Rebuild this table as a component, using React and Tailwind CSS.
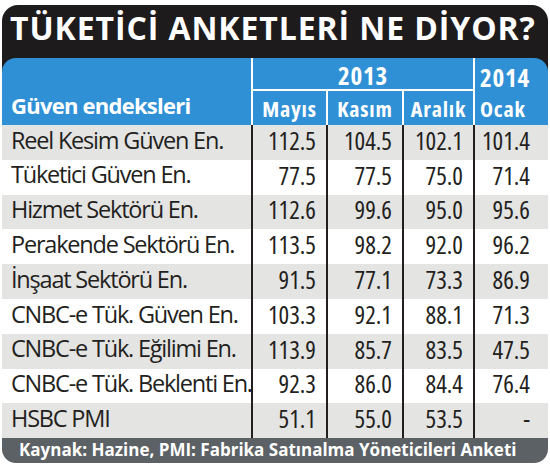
import React from 'react';

const rows = [
  { label: 'Reel Kesim Güven En.', values: ['112.5', '104.5', '102.1', '101.4'] },
  { label: 'Tüketici Güven En.', values: ['77.5', '77.5', '75.0', '71.4'] },
  { label: 'Hizmet Sektörü En.', values: ['112.6', '99.6', '95.0', '95.6'] },
  { label: 'Perakende Sektörü En.', values: ['113.5', '98.2', '92.0', '96.2'] },
  { label: 'İnşaat Sektörü En.', values: ['91.5', '77.1', '73.3', '86.9'] },
  { label: 'CNBC-e Tük. Güven En.', values: ['103.3', '92.1', '88.1', '71.3'] },
  { label: 'CNBC-e Tük. Eğilimi En.', values: ['113.9', '85.7', '83.5', '47.5'] },
  { label: 'CNBC-e Tük. Beklenti En.', values: ['92.3', '86.0', '84.4', '76.4'] },
  { label: 'HSBC PMI', values: ['51.1', '55.0', '53.5', '-'] },
];

const cols = 'grid grid-cols-[249px_75px_76px_71px_75px]';

export default function App() {
  return (
    <div className="w-[550px] h-[470px] bg-white pt-[5px] px-[2px] font-['Open_Sans',sans-serif] text-[#231f20]">
      {/* Title + blue header */}
      <div className="bg-[#1e1b1c] rounded-t-[16px]">
        <div className="h-[53px] flex items-end pl-[8px] pb-[14px]">
          <h1 className="text-[32px] leading-none font-bold text-white tracking-[0.9px] whitespace-nowrap">
            TÜKETİCİ ANKETLERİ NE DİYOR?
          </h1>
        </div>
        <div className={`${cols} bg-[#3090d6] rounded-t-[14px] h-[67px] text-white font-bold`}>
          <div className="flex items-end pl-[9px] pb-[9px] text-[22px] leading-none tracking-[-0.75px]">
            Güven endeksleri
          </div>
          <div className="col-span-3 flex flex-col border-l-2 border-white">
            <div className="h-[33px] border-b-2 border-white flex items-end justify-center pb-[1px] text-[25px] leading-none font-stretch-condensed tracking-[0.8px]">
              2013
            </div>
            <div className="flex-1 grid grid-cols-[73px_76px_71px] text-[22px] leading-none font-stretch-condensed tracking-[0.8px]">
              <div className="flex items-end justify-center pb-[6px]">Mayıs</div>
              <div className="flex items-end justify-center pb-[6px] border-l-2 border-white">Kasım</div>
              <div className="flex items-end justify-center pb-[6px] border-l-2 border-white">Aralık</div>
            </div>
          </div>
          <div className="border-l-2 border-white flex flex-col pl-[5px] font-stretch-condensed tracking-[0.8px]">
            <div className="h-[33px] flex items-end pb-[1px] text-[25px] leading-none">2014</div>
            <div className="flex-1 flex items-end pb-[6px] text-[22px] leading-none">Ocak</div>
          </div>
        </div>
      </div>

      {/* Body */}
      <div>
        {rows.map((r, i) => (
          <div
            key={r.label}
            className={`${cols} h-[34.8px] leading-none ${i % 2 === 0 ? 'bg-[#e4e4e3]' : 'bg-white'}`}
          >
            <div className="flex items-center pl-[9px] pb-[4px] whitespace-nowrap text-[23.5px] tracking-[-1.2px]">{r.label}</div>
            <div className="flex items-center justify-end pr-[10px] pb-[4px] border-l-2 border-[#231f20] text-[25px] font-stretch-condensed">{r.values[0]}</div>
            <div className="flex items-center justify-end pr-[10px] pb-[4px] border-l-2 border-[#231f20] text-[25px] font-stretch-condensed">{r.values[1]}</div>
            <div className="flex items-center justify-end pr-[10px] pb-[4px] border-l-2 border-[#231f20] text-[25px] font-stretch-condensed">{r.values[2]}</div>
            <div className="flex items-center justify-end pr-[18px] pb-[4px] border-l-2 border-[#231f20] text-[25px] font-stretch-condensed">{r.values[3]}</div>
          </div>
        ))}
      </div>

      {/* Footer */}
      <div className="h-[25px] bg-[#5c6166] rounded-b-[14px] flex items-center pl-[17px] pb-[2px] text-white font-bold text-[17px] leading-none whitespace-nowrap">
        Kaynak: Hazine, PMI: Fabrika Satınalma Yöneticileri Anketi
      </div>
    </div>
  );
}
